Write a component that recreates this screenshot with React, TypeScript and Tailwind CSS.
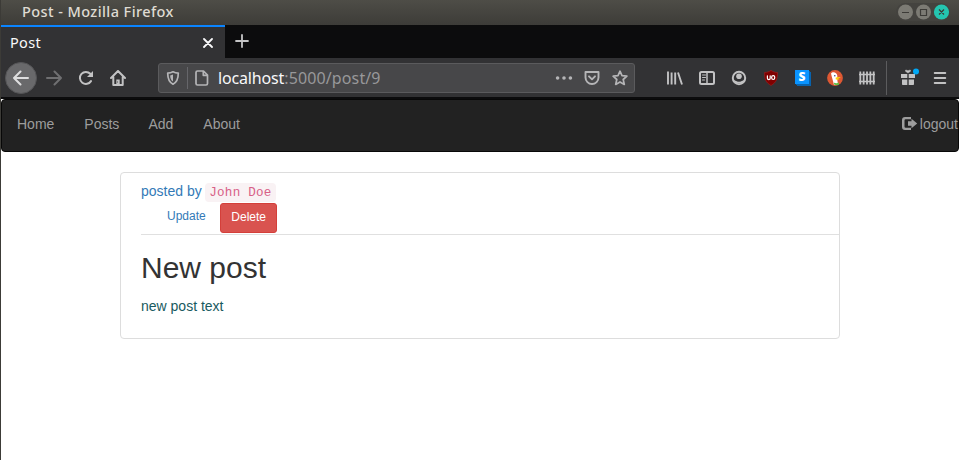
import type { ReactNode } from "react";

function Icon({ children, size = 16, className = "" }: { children: ReactNode; size?: number; className?: string }) {
  return (
    <svg
      width={size}
      height={size}
      viewBox="0 0 16 16"
      fill="none"
      stroke="currentColor"
      strokeWidth="2"
      strokeLinecap="round"
      strokeLinejoin="round"
      className={`shrink-0 ${className}`}
    >
      {children}
    </svg>
  );
}

function Slot({ children }: { children: ReactNode }) {
  return <button className="flex h-8 w-8 shrink-0 items-center justify-center">{children}</button>;
}

function TitleBar() {
  return (
    <header className="flex h-[25px] items-center justify-between bg-linear-to-b from-[#4e4d47] to-[#3d3c38] pl-[22px] pr-[9px]">
      <span className="-mt-[2px] font-['Noto_Sans'] text-[14.5px] leading-none font-medium tracking-[0.42px] text-[#dfdbd2]">
        Post - Mozilla Firefox
      </span>
      <svg width="54" height="18" viewBox="0 0 54 18" fill="none" className="-mt-[2px]">
        <rect x="0" y="0" width="54" height="18" rx="9" fill="#44433f" />
        <circle cx="9.5" cy="9" r="7.5" fill="#7c7b74" />
        <circle cx="27.5" cy="9" r="7.5" fill="#7c7b74" />
        <circle cx="45.5" cy="9" r="7.6" fill="#24c5b0" />
        <path d="M6 9.5h7M24.5 6.5h6v6h-6zM43 6.5l5 5M48 6.5l-5 5" stroke="#3c3b37" strokeWidth="1.2" />
      </svg>
    </header>
  );
}

function TabStrip() {
  return (
    <div className="flex h-[33px] bg-[#0c0c0d]">
      <div className="flex w-[224px] items-center justify-between border-t-2 border-[#0a84ff] bg-[#323234] pr-3 pl-[9px] text-[#f9f9fa]">
        <span className="font-['Noto_Sans'] text-[14.5px] leading-none tracking-[0.3px]">Post</span>
        <svg width="10" height="10" viewBox="0 0 10 10" stroke="currentColor" strokeWidth="1.8" strokeLinecap="round">
          <path d="M1 1l8 8M9 1L1 9" />
        </svg>
      </div>
      <svg width="34" height="32" viewBox="0 0 34 32" stroke="#c5c5c6" strokeWidth="1.8" strokeLinecap="round">
        <path d="M11 16h12M17 10v12" />
      </svg>
    </div>
  );
}

function AddressBar() {
  return (
    <div className="ml-6 flex h-[30px] w-[477px] items-center rounded-[3px] border border-[#5b5b5d] bg-[#474749] text-[#b5b5b7]">
      <Icon className="ml-[6px]">
        <path d="M8 1.8c1.8 1 3.5 1.3 5.3 1.3 0 5.2-.8 9-5.3 11.1C3.500 12.100 2.700 8.300 2.700 3.100 4.500 3.100 6.200 2.800 8 1.800z" strokeWidth="1.7" />
        <path d="M8 4.600v6.800C5.900 10.100 5.300 8.300 5.200 5.400 6.200 5.300 7.100 5.100 8 4.600z" fill="currentColor" stroke="none" />
      </Icon>
      <span className="ml-[6px] h-[22px] w-px bg-[#66666a]" />
      <Icon className="ml-[6px]">
        <path d="M3.500 1h6l4 4v8.500a1.500 1.500 0 0 1-1.500 1.500h-8.500A1.500 1.500 0 0 1 2 13.500v-11A1.500 1.500 0 0 1 3.500 1zM9.300 1.300v4h4" strokeWidth="1.7" />
      </Icon>
      <span className="ml-2 flex-1 font-['Noto_Sans'] text-[16px] leading-none tracking-[0.12px] text-[#98989a]">
        <span className="tracking-[-0.15px] text-[#f9f9fa]">localhost</span>:5000/post/9
      </span>
      <Icon size={18}>
        <path d="M2.300 8h.01M8 8h.01M13.700 8h.01" strokeWidth="3.200" />
      </Icon>
      <Icon className="ml-[11px]">
        <path d="M1.500 2h13v5.500a6.500 6.500 0 0 1-13 0zM5 6.300l3 3 3-3" strokeWidth="1.900" />
      </Icon>
      <Icon className="mr-[6px] ml-3">
        <path d="M8 1.200l2 4.500 4.900.5-3.700 3.300 1.100 4.900L8 11.900l-4.300 2.500 1.100-4.900L1.100 6.200l4.900-.5z" strokeWidth="1.700" />
      </Icon>
    </div>
  );
}

function Toolbar() {
  return (
    <div className="flex h-[41px] items-center border-b-2 border-[#0c0c0d] bg-[#323234] pl-[4px] text-[#c2c2c3]">
      <button className="mr-px flex h-8 w-8 shrink-0 items-center justify-center rounded-full border border-[#555557] bg-[#69696b]">
        <Icon className="text-[#dededf]">
          <path d="M1 8h14M7.500 1.500L1 8l6.500 6.500" />
        </Icon>
      </button>
      <Slot>
        <Icon className="text-[#6f6f71]">
          <path d="M1 8h14M8.500 1.500L15 8l-6.500 6.500" />
        </Icon>
      </Slot>
      <Slot>
        <Icon>
          <path d="M13 11.100A6 6 0 1 1 12.300 3.800" />
          <path d="M15 1v6H9z" fill="currentColor" stroke="none" />
        </Icon>
      </Slot>
      <Slot>
        <Icon>
          <path d="M1 8l7-7 7 7M3.300 7v8h9.400V7" />
          <path d="M6.300 9.500h3.400V15H6.300z" fill="currentColor" stroke="none" />
          <path d="M7.600 12h.01" strokeWidth="1" stroke="#323234" />
        </Icon>
      </Slot>
      <AddressBar />
      <div className="ml-6 flex items-center">
        <Slot>
          <Icon>
            <path d="M1 1.500v13M4.600 2.500v12M8.200 2.500v12M11 2.500l4 12" strokeWidth="1.900" strokeLinecap="butt" />
          </Icon>
        </Slot>
        <Slot>
          <Icon>
            <rect x="1" y="2" width="14" height="12" rx="1.500" />
            <path d="M8 2v12" strokeWidth="1.500" />
            <path d="M3.500 5h3M3.500 7.500h3M3.500 10h2" strokeWidth="1" />
          </Icon>
        </Slot>
        <Slot>
          <Icon>
            <circle cx="8" cy="8" r="6.200" />
            <circle cx="8" cy="6.300" r="2.800" fill="currentColor" stroke="none" />
            <path d="M2.800 9.300c1.400 1.700 3 2.300 5.200 2.300s3.800-.6 5.200-2.300l-1.500 4H4.300z" fill="currentColor" stroke="none" />
            <path d="M4 9.300c1.800 2 6.200 2 8 0" stroke="#323234" strokeWidth="1.200" />
          </Icon>
        </Slot>
        <Slot>
          <Icon>
            <path d="M8 .5c2 1.300 4 2 6.600 2 0 6-1.100 10-6.600 13C2.500 12.500 1.400 8.500 1.400 2.500 4 2.500 6 1.800 8 .5z" fill="#800000" stroke="#a12020" strokeWidth=".6" />
            <path d="M4.400 5.800v2.400a1.400 1.400 0 0 0 2.800 0V5.800" stroke="#fff" strokeWidth="1.200" />
            <rect x="8.700" y="5.700" width="3" height="3.800" rx="1.400" stroke="#fff" strokeWidth="1.200" />
          </Icon>
        </Slot>
        <Slot>
          <span className="-mt-[2px] -ml-[2px] flex h-[14px] w-[14px] items-center justify-center bg-[#0a94ff] font-['Open_Sans'] text-[12px] leading-none font-extrabold text-white shadow-[1px_1px_0_#0863ae,2px_2px_0_#0863ae]">
            S
          </span>
        </Slot>
        <Slot>
          <Icon>
            <circle cx="8" cy="8" r="7.900" fill="#de5833" stroke="none" />
            <path d="M4 3.500C5 2 7.500 2 9 3.300c1.500 1.200 1.500 3 1.200 5 0 2.500.7 4 .8 6.700H7C6.300 11.300 4.700 7 4 3.500z" fill="#fff" stroke="none" />
            <path d="M8.800 7.600c2-.8 4-.8 5-.4l-2.800 1.200 1.800.7c-1.700.8-3.400.6-4.200.2z" fill="#fdd20a" stroke="none" />
            <circle cx="7.800" cy="5.800" r=".8" fill="#334c76" stroke="none" />
            <path d="M7 12.800l2.500.5 2.500-.8v2.200l-2.500.5-2.500-.6z" fill="#65bc46" stroke="none" />
          </Icon>
        </Slot>
        <Slot>
          <Icon>
            <path d="M1.300 1.500v13M4.650 1.500v13M8 1.500v13M11.350 1.500v13M14.700 1.500v13" strokeWidth="1.800" strokeLinecap="butt" />
            <path d="M0 4.500h16M0 11.500h16" strokeWidth="1.300" strokeLinecap="butt" />
          </Icon>
        </Slot>
        <span className="ml-[3px] h-[34px] w-px bg-[#5c5c5e]" />
        <span className="ml-[6px] flex">
          <Slot>
            <svg width="20" height="18" viewBox="0 0 20 18" fill="currentColor" className="-mt-[2px] ml-[2px] shrink-0">
              <path d="M1 6h6.300v4H1zM8.700 6H15v4H8.700zM2 11.500h5.300V17H2.800a.8.800 0 0 1-.8-.8zM8.700 11.500H14v4.700a.8.800 0 0 1-.8.800H8.700z" />
              <path d="M8 5L5.500 3.300V2.200h1.600L8 3l.9-.8h1.600v1.100z" stroke="currentColor" strokeWidth=".5" />
              <circle cx="16" cy="3.500" r="3" fill="#00a8f5" />
            </svg>
          </Slot>
        </span>
        <span className="-ml-px flex">
          <Slot>
            <Icon>
              <path d="M2.700 3h10.600M2.700 8h10.600M2.700 13h10.600" strokeWidth="1.900" />
            </Icon>
          </Slot>
        </span>
      </div>
    </div>
  );
}

function SiteNav() {
  return (
    <nav className="flex h-[53px] items-center justify-between rounded-[4px] border border-[#080808] bg-[#222] pl-[15px] text-[14px] leading-5 text-[#9d9d9d]">
      <div className="-mt-[3px] flex gap-[30px]">
        <a>Home</a>
        <a>Posts</a>
        <a className="-ml-px">Add</a>
        <a>About</a>
      </div>
      <a className="-mt-[3px] flex items-center gap-[2px]">
        <svg width="16" height="14" viewBox="0 0 16 14" fill="currentColor">
          <path d="M9 0v2.300H3.700A1.200 1.200 0 0 0 2.500 3.500v6a1.200 1.200 0 0 0 1.200 1.200H9V13H3a3 3 0 0 1-3-3V3a3 3 0 0 1 3-3zM9.500 1.700l5.700 4.800-5.700 4.800V8.700H6V4.300h3.500z" />
        </svg>
        logout
      </a>
    </nav>
  );
}

function PostCard() {
  return (
    <article className="mx-auto mt-5 h-[167px] w-[720px] rounded-[4px] border border-[#ddd] pl-5 text-[14px] leading-5">
      <div className="h-[62px] border-b border-[#e0e0e0] pt-2">
        <div className="flex h-[22px] items-start text-[#337ab7]">
          <span className="pl-[0.5px]">posted by</span>
          <code className="mt-[2px] ml-[3.5px] rounded-[4px] bg-[#f9f2f4] px-1 pt-[3px] pb-px font-['Liberation_Mono',monospace] text-[12.6px] leading-[15px] tracking-[0.25px] text-[#d86087]">
            John Doe
          </code>
        </div>
        <div className="flex text-[12px] leading-[18px]">
          <a className="ml-[15px] rounded-[3px] border border-transparent py-[3px] pr-0 pl-[10.5px] text-[#337ab7]">Update</a>
          <button className="ml-[13.500px] h-[30px] w-[57px] rounded-[3px] border border-[#d43f3a] bg-[#d9534f] pb-[3px] text-white">
            Delete
          </button>
        </div>
      </div>
      <h2 className="mt-4 pl-[0.5px] text-[30px] leading-[33px] text-[#333]">New post</h2>
      <p className="mt-3 pl-[0.5px] text-[#195a60]">new post text</p>
    </article>
  );
}

export default function App() {
  return (
    <div className="h-[460px] w-[959px] overflow-hidden border-l border-[#3c3b37] bg-white font-['Liberation_Sans',Arial,sans-serif]">
      <div className="-ml-px">
        <TitleBar />
      </div>
      <TabStrip />
      <Toolbar />
      <SiteNav />
      <div className="-ml-px">
        <PostCard />
      </div>
    </div>
  );
}
